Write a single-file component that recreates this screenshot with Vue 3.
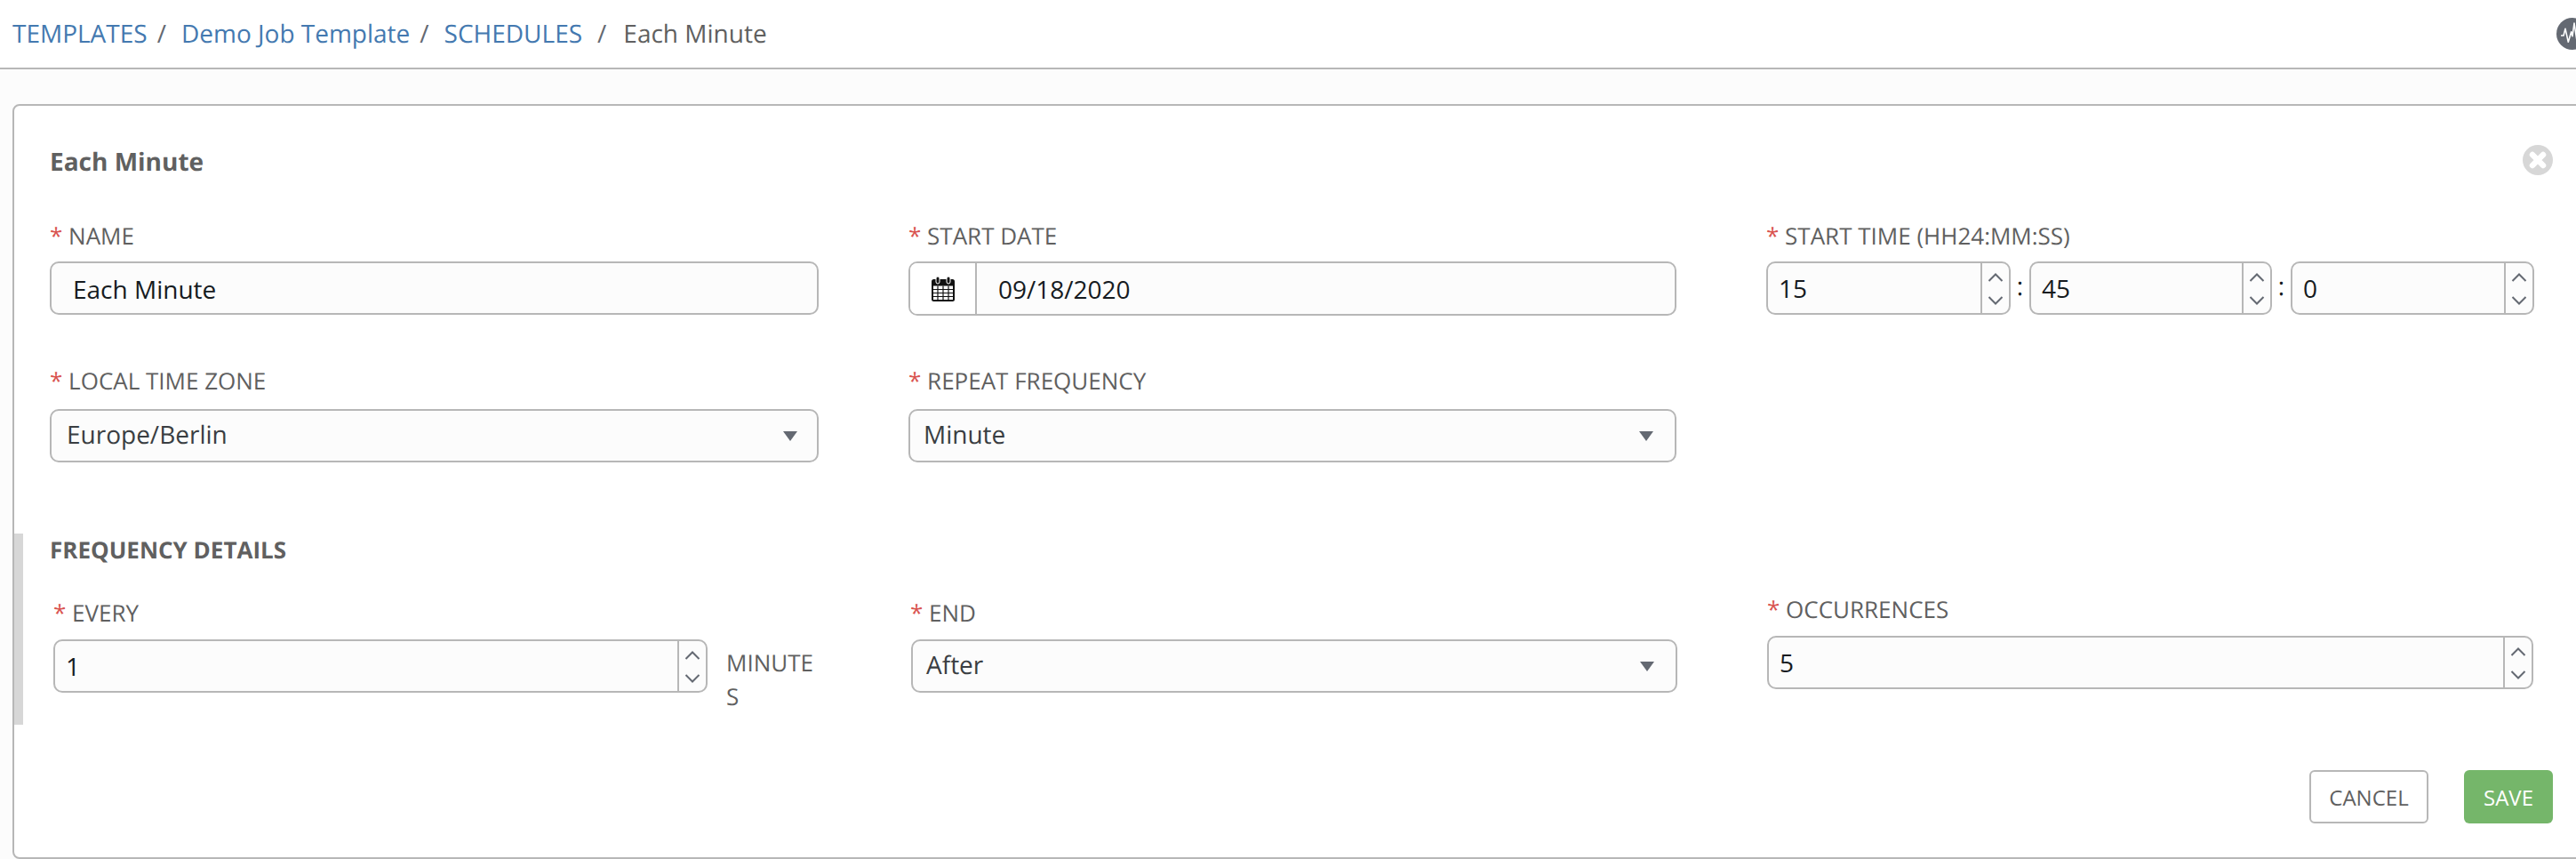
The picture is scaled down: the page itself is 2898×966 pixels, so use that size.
<script setup>
const timeParts = [
  { value: '15', cls: 'h' },
  { value: '45', cls: 'm' },
  { value: '0', cls: 's' }
]
</script>

<template>
  <div class="page">
    <header class="bar">
      <nav class="crumbs">
        <a class="link">TEMPLATES</a><span class="sep">/</span>
        <a class="link">Demo Job Template</a><span class="sep">/</span>
        <a class="link">SCHEDULES</a><span class="sep wide">/</span>
        <span class="current">Each Minute</span>
      </nav>
      <svg class="pulse" width="36" height="36" viewBox="0 0 36 36">
        <circle cx="18" cy="18" r="18" fill="#646972" />
        <path d="M5 20H8L10 12.3L13.3 27.3L16.7 15.7L18 20.7L20 6L22.7 24L25 17L27 20H31" fill="none" stroke="#fff" stroke-width="1.6" stroke-linejoin="round" />
      </svg>
    </header>

    <main class="content">
      <section class="card">
        <div class="title-row">
          <h1 class="title">Each Minute</h1>
          <svg class="close" width="34" height="34" viewBox="0 0 34 34">
            <circle cx="17" cy="17" r="17" fill="#d7d7d7" />
            <path d="M11 11L23 23M23 11L11 23" stroke="#fff" stroke-width="6.5" stroke-linecap="round" />
          </svg>
        </div>

        <div class="row row-one">
          <div class="field w1">
            <label class="label"><span class="req">*</span> NAME</label>
            <input class="control text-input" type="text" value="Each Minute" />
          </div>
          <div class="field w2">
            <label class="label"><span class="req">*</span> START DATE</label>
            <div class="date control">
              <span class="addon">
                <svg width="26" height="28" viewBox="0 0 26 28">
                  <rect x="0" y="3" width="26" height="25" rx="2.5" fill="#111" />
                  <rect x="5" y="0" width="4" height="8" rx="2" fill="#111" stroke="#fff" stroke-width="1" />
                  <rect x="17" y="0" width="4" height="8" rx="2" fill="#111" stroke="#fff" stroke-width="1" />
                  <path d="M2 10.5H24V26H2Z" fill="#fff" />
                  <path d="M2 14.5H24M2 18.5H24M2 22.5H24M7 10.5V26M13 10.5V26M19 10.5V26" stroke="#111" stroke-width="1.2" fill="none" />
                </svg>
              </span>
              <input class="bare date-text" type="text" value="09/18/2020" />
            </div>
          </div>
          <div class="field w3">
            <label class="label"><span class="req">*</span> START TIME (HH24:MM:SS)</label>
            <div class="time">
              <template v-for="(part, i) in timeParts" :key="part.cls">
                <span v-if="i > 0" class="colon">:</span>
                <div class="spin control" :class="part.cls">
                  <input class="bare num" type="text" :value="part.value" />
                  <div class="arrows">
                    <svg width="18" height="10" viewBox="0 0 18 10"><path d="M1.5 9L9 1.5L16.5 9" fill="none" stroke="#646972" stroke-width="2" /></svg>
                    <svg width="18" height="10" viewBox="0 0 18 10"><path d="M1.5 1L9 8.5L16.5 1" fill="none" stroke="#646972" stroke-width="2" /></svg>
                  </div>
                </div>
              </template>
            </div>
          </div>
        </div>

        <div class="row row-two">
          <div class="field w1">
            <label class="label"><span class="req">*</span> LOCAL TIME ZONE</label>
            <div class="select control">
              <span class="value">Europe/Berlin</span>
              <i class="caret"></i>
            </div>
          </div>
          <div class="field w2">
            <label class="label"><span class="req">*</span> REPEAT FREQUENCY</label>
            <div class="select control tight">
              <span class="value">Minute</span>
              <i class="caret"></i>
            </div>
          </div>
        </div>

        <section class="details">
          <h2 class="details-title">FREQUENCY DETAILS</h2>
          <div class="detail-row">
            <div class="field every">
              <label class="label"><span class="req">*</span> EVERY</label>
              <div class="every-line">
                <div class="spin control every-spin">
                  <input class="bare num" type="text" value="1" />
                  <div class="arrows">
                    <svg width="18" height="10" viewBox="0 0 18 10"><path d="M1.5 9L9 1.5L16.5 9" fill="none" stroke="#646972" stroke-width="2" /></svg>
                    <svg width="18" height="10" viewBox="0 0 18 10"><path d="M1.5 1L9 8.5L16.5 1" fill="none" stroke="#646972" stroke-width="2" /></svg>
                  </div>
                </div>
                <span class="unit">MINUTES</span>
              </div>
            </div>
            <div class="field end">
              <label class="label"><span class="req">*</span> END</label>
              <div class="select control tight">
                <span class="value">After</span>
                <i class="caret"></i>
              </div>
            </div>
            <div class="field occ">
              <label class="label"><span class="req">*</span> OCCURRENCES</label>
              <div class="spin control">
                <input class="bare num" type="text" value="5" />
                <div class="arrows">
                  <svg width="18" height="10" viewBox="0 0 18 10"><path d="M1.5 9L9 1.5L16.5 9" fill="none" stroke="#646972" stroke-width="2" /></svg>
                  <svg width="18" height="10" viewBox="0 0 18 10"><path d="M1.5 1L9 8.5L16.5 1" fill="none" stroke="#646972" stroke-width="2" /></svg>
                </div>
              </div>
            </div>
          </div>
        </section>

        <div class="actions">
          <button class="btn cancel" type="button">CANCEL</button>
          <button class="btn save" type="button">SAVE</button>
        </div>
      </section>
    </main>
  </div>
</template>

<style scoped>
.page {
  width: 2898px;
  height: 966px;
  overflow: hidden;
  background: #fcfcfc;
  font-family: "Open Sans", "Noto Sans", sans-serif;
  color: #606060;
  text-rendering: geometricPrecision;
}
.bar {
  height: 76px;
  box-sizing: content-box;
  border-bottom: 2px solid #b7b7b7;
  background: #fff;
  display: flex;
  align-items: center;
  justify-content: space-between;
  padding-left: 14px;
}
.crumbs {
  display: flex;
  align-items: center;
  font-size: 28px;
  line-height: 40px;
  white-space: nowrap;
}
.link { color: #4479b0; }
.sep { margin: 0 17px 0 11px; color: #646972; }
.sep.wide { margin: 0 19px 0 17px; }
.current { color: #606060; }
.pulse { flex: none; margin-right: -14px; }

.content { padding: 39px 0 0 14px; }
.card {
  width: 2898px;
  box-sizing: border-box;
  height: 849px;
  background: #fff;
  border: 2px solid #b7b7b7;
  border-radius: 8px;
  padding: 43px 38px 0 40px;
}
.title-row {
  display: flex;
  align-items: center;
  justify-content: space-between;
  height: 40px;
}
.title {
  margin: 0;
  font-size: 28px;
  line-height: 40px;
  font-weight: 700;
  color: #606060;
}
.close { flex: none; margin-top: -4px; }

.row { display: flex; align-items: flex-start; }
.row-one { margin-top: 48px; }
.row-two { margin-top: 58px; }
.row-two .label { margin-bottom: 17px; }
.w1 { width: 865px; }
.w2 { width: 864px; margin-left: 101px; }
.w3 { width: 864px; margin-left: 101px; }

.label {
  display: block;
  font-size: 26px;
  line-height: 30px;
  margin-bottom: 14px;
  color: #606060;
  white-space: nowrap;
}
.req { color: #d9534f; }

.control {
  box-sizing: border-box;
  height: 60px;
  border: 2px solid #b7b7b7;
  border-radius: 10px;
  background: #fcfcfc;
  font-family: inherit;
  font-size: 28px;
  color: #161b1f;
}
.text-input {
  display: block;
  width: 100%;
  padding: 2px 24px 0;
  outline: none;
}
.bare {
  border: 0;
  outline: none;
  background: transparent;
  font-family: inherit;
  font-size: 28px;
  color: #161b1f;
  min-width: 0;
  padding: 0;
}
.date { display: flex; height: 61px; overflow: hidden; }
.addon {
  flex: none;
  width: 73px;
  display: flex;
  align-items: center;
  justify-content: center;
  background: #fff;
  border-right: 2px solid #b7b7b7;
}
.date-text { flex: 1; padding-left: 24px; }

.time { display: flex; align-items: center; }
.colon {
  flex: none;
  width: 21px;
  text-align: center;
  font-size: 28px;
  line-height: 60px;
  margin-top: -4px;
  color: #161b1f;
}
.spin { display: flex; overflow: hidden; }
.spin.h { width: 275px; }
.spin.m { width: 273px; }
.spin.s { width: 274px; }
.num { flex: 1; width: 100%; padding-left: 12px; }
.arrows {
  flex: none;
  width: 32px;
  box-sizing: border-box;
  border-left: 2px solid #b7b7b7;
  display: flex;
  flex-direction: column;
  align-items: center;
  justify-content: space-between;
  padding: 11px 0 9px;
}

.select {
  display: flex;
  align-items: center;
  justify-content: space-between;
  padding: 0 22px 2px 17px;
  color: #3a3e42;
}
.select.tight { padding-left: 15px; padding-right: 24px; }
.caret {
  width: 0;
  height: 0;
  margin-top: 2px;
  border-left: 8px solid transparent;
  border-right: 8px solid transparent;
  border-top: 11px solid #646972;
}

.details {
  margin-top: 80px;
  margin-left: -40px;
  height: 215px;
  box-sizing: border-box;
  border-left: 10px solid #d7d7d7;
  padding-left: 30px;
}
.details-title {
  margin: 0;
  font-size: 26px;
  line-height: 36px;
  font-weight: 700;
  color: #606060;
}
.detail-row {
  display: flex;
  align-items: flex-start;
  margin-top: 38px;
  margin-left: 4px;
}
.every { width: 855px; }
.every .label { margin-bottom: 15px; }
.every-line { display: flex; align-items: flex-start; }
.every-spin { width: 736px; flex: none; }
.unit {
  width: 98px;
  margin-left: 21px;
  margin-top: 7px;
  font-size: 26px;
  line-height: 38px;
  word-break: break-all;
  color: #606060;
}
.end { width: 862px; margin-left: 110px; }
.end .label { margin-left: -1px; margin-bottom: 15px; }
.occ { width: 862px; margin-left: 101px; margin-top: -4px; }
.occ .label { margin-bottom: 15px; }

.actions {
  display: flex;
  justify-content: flex-end;
  gap: 40px;
  margin-top: 51px;
}
.btn {
  height: 60px;
  box-sizing: border-box;
  border-radius: 6px;
  font-family: inherit;
  font-size: 24px;
  padding: 0;
}
.cancel {
  width: 134px;
  background: #fff;
  border: 2px solid #b7b7b7;
  color: #606060;
}
.save {
  width: 100px;
  background: #75b66a;
  border: 0;
  color: #fff;
}
</style>

<style>
html, body { margin: 0; overflow: hidden; }
</style>
